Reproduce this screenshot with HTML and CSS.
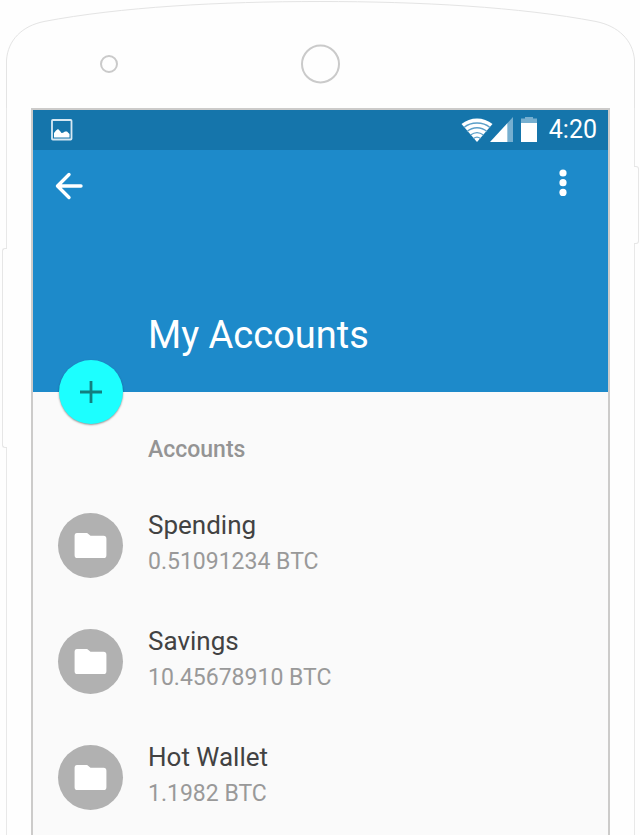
FILE: index.html
```html
<!DOCTYPE html>
<html lang="en">
<head>
<meta charset="utf-8">
<meta name="viewport" content="width=device-width, initial-scale=1">
<title>My Accounts</title>
<link rel="stylesheet" href="styles.css">
</head>
<body>
<svg class="bezel" viewBox="0 0 640 108" aria-hidden="true">
  <path class="outline" d="M6.500 108V60C8 40 22 26 44 21.500C120 7 220 1.500 320 1.500S520 7 596 21.500C618 26 633 40 634.500 60V108"/>
  <circle class="ring" cx="109" cy="64" r="8"/>
  <circle class="ring" cx="320.500" cy="64" r="18.500"/>
</svg>
<div class="phone">
  <span class="side-key volume"></span>
  <span class="side-key power"></span>
  <div class="screen">
    <div class="status-bar">
      <svg class="picture-icon" width="22" height="22" viewBox="0 0 22 22" aria-hidden="true">
        <rect x="1" y="1" width="19.500" height="19.500" rx="0.800" fill="none" stroke="#d6e8f3" stroke-width="1.800"/>
        <path fill="#fff" d="M3 18.500V14L5 11.500L7 10L9 12L10.500 14L12 13.800L14 12.500L16 12.500L18.500 15V18.500Z"/>
      </svg>
      <div class="indicators">
        <svg width="77" height="26" viewBox="0 0 77 26" aria-hidden="true">
          <path fill="#fff" d="M0.500 7C9-0.500 23-0.500 31.500 7L16 25Z"/>
          <g fill="none" stroke="#5b9fc8" stroke-width="1.300">
            <path d="M3 10.500C10 4.500 22 4.500 29 10.500"/>
            <path d="M6 14.500C12 9.500 20 9.500 26 14.500"/>
            <path d="M9.500 18C13.500 15 18.500 15 22.500 18"/>
            <path d="M12.500 21.500C15 19.500 17 19.500 19.500 21.500"/>
          </g>
          <path fill="#76afd0" d="M46.500 6L52 0V25H46.500Z"/>
          <path fill="#fff" d="M29 25L46.500 6V25Z"/>
          <path fill="#76afd0" d="M60 7V1.500H64V0H72V1.500H76V7Z"/>
          <path fill="#fff" d="M60 6H76V25H60Z"/>
        </svg>
        <time>4:20</time>
      </div>
    </div>
    <header class="app-bar">
      <div class="toolbar">
        <button class="icon-button" type="button" aria-label="Back">
          <svg width="28" height="28" viewBox="0 0 28 28" aria-hidden="true">
            <path fill="none" stroke="#fff" stroke-width="3.400" stroke-linecap="round" stroke-linejoin="round" d="M26 14H3M14 2.500L2.500 14L14 25.500"/>
          </svg>
        </button>
        <button class="icon-button more" type="button" aria-label="More options">
          <svg width="8" height="28" viewBox="0 0 8 28" fill="#fff" aria-hidden="true">
            <circle cx="4" cy="4" r="3.600"/><circle cx="4" cy="13.700" r="3.600"/><circle cx="4" cy="23.400" r="3.600"/>
          </svg>
        </button>
      </div>
      <h1>My Accounts</h1>
      <button class="fab" type="button" aria-label="Add account">
        <svg width="24" height="24" viewBox="0 0 24 24" aria-hidden="true">
          <path stroke="#127f80" stroke-width="2.800" d="M12 1V23M1 12H23"/>
        </svg>
      </button>
    </header>
    <main>
      <h2>Accounts</h2>
      <ul class="accounts">
        <li>
          <span class="avatar"><svg width="33" height="27" viewBox="0 0 34 28" aria-hidden="true"><path fill="#fff" d="M3 1H13.500L17 4H30.500Q33.500 4 33.500 7V24Q33.500 27 30.500 27H3.500Q0.500 27 0.500 24V4Q0.500 1 3 1Z"/></svg></span>
          <div><div class="name">Spending</div><div class="balance">0.51091234 BTC</div></div>
        </li>
        <li>
          <span class="avatar"><svg width="33" height="27" viewBox="0 0 34 28" aria-hidden="true"><path fill="#fff" d="M3 1H13.500L17 4H30.500Q33.500 4 33.500 7V24Q33.500 27 30.500 27H3.500Q0.500 27 0.500 24V4Q0.500 1 3 1Z"/></svg></span>
          <div><div class="name">Savings</div><div class="balance">10.45678910 BTC</div></div>
        </li>
        <li>
          <span class="avatar"><svg width="33" height="27" viewBox="0 0 34 28" aria-hidden="true"><path fill="#fff" d="M3 1H13.500L17 4H30.500Q33.500 4 33.500 7V24Q33.500 27 30.500 27H3.500Q0.500 27 0.500 24V4Q0.500 1 3 1Z"/></svg></span>
          <div><div class="name">Hot Wallet</div><div class="balance">1.1982 BTC</div></div>
        </li>
      </ul>
    </main>
  </div>
</div>
</body>
</html>
```
FILE: styles.css
```css
* { box-sizing: border-box; }

body {
  margin: 0;
  min-height: 100vh;
  display: flex;
  flex-direction: column;
  background: #fefefe;
  font-family: Roboto, "Liberation Sans", sans-serif;
}

h1, h2, ul { margin: 0; padding: 0; }

button {
  padding: 0;
  border: 0;
  background: none;
  cursor: pointer;
}

svg { display: block; }

.bezel { width: 100%; }
.outline { fill: none; stroke: #e4e4e4; stroke-width: 1; }
.ring { fill: none; stroke: #cacaca; stroke-width: 2; }

.phone {
  position: relative;
  flex: 1;
  display: flex;
  margin: 0 5px 0 6px;
  padding: 0 24px;
  border: solid #e8e8e8;
  border-width: 0 1px;
}

/* Hardware keys stick out over the edge of the case */
.side-key {
  position: absolute;
  width: 5px;
  background: #fefefe;
  border: 1px solid #e6e6e6;
}
.volume {
  left: -5px;
  top: 140px;
  height: 200px;
  border-right: 0;
  border-radius: 3px 0 0 3px;
}
.power {
  right: -5px;
  top: 58px;
  height: 78px;
  border-left: 0;
  border-radius: 0 3px 3px 0;
}

.screen {
  flex: 1;
  border: 2px solid #cccbca;
  border-bottom: 0;
  background: #fafafa;
}

.status-bar {
  display: flex;
  justify-content: space-between;
  align-items: center;
  height: 40px;
  padding: 0 11px 0 18px;
  background: #1575ab;
  color: #fff;
}
.indicators { display: flex; align-items: center; gap: 11px; }
.indicators time { font-size: 25px; line-height: 42px; }

.app-bar {
  position: relative;
  display: flex;
  flex-direction: column;
  justify-content: space-between;
  height: 242px;
  padding: 16px 25px 33px 16px;
  background: #1d8aca;
  color: #fff;
}
.toolbar { display: flex; justify-content: space-between; }
.icon-button {
  display: grid;
  place-items: center;
  width: 40px;
  height: 40px;
}
.more { height: 34px; }
h1 {
  padding-left: 99px;
  font-size: 38px;
  line-height: 48px;
  font-weight: 400;
}

/* Floating button straddles the lower edge of the app bar */
.fab {
  position: absolute;
  left: 26px;
  bottom: -32px;
  display: grid;
  place-items: center;
  width: 64px;
  height: 64px;
  border-radius: 50%;
  background: #1cffff;
  box-shadow: 0 1px 2px rgba(0, 0, 0, 0.4);
}

h2 {
  padding: 43px 25px 22px 115px;
  color: #949494;
  font-size: 23px;
  line-height: 30px;
  font-weight: 500;
}

.accounts { list-style: none; }
.accounts li {
  display: flex;
  align-items: center;
  gap: 25px;
  height: 116px;
  padding: 0 25px;
}
.avatar {
  display: grid;
  place-items: center;
  flex: none;
  width: 65px;
  height: 65px;
  border-radius: 50%;
  background: #b1b1b1;
}
.name { color: #424242; font-size: 26px; line-height: 34px; }
.balance { color: #999; font-size: 23px; line-height: 40px; }
```
